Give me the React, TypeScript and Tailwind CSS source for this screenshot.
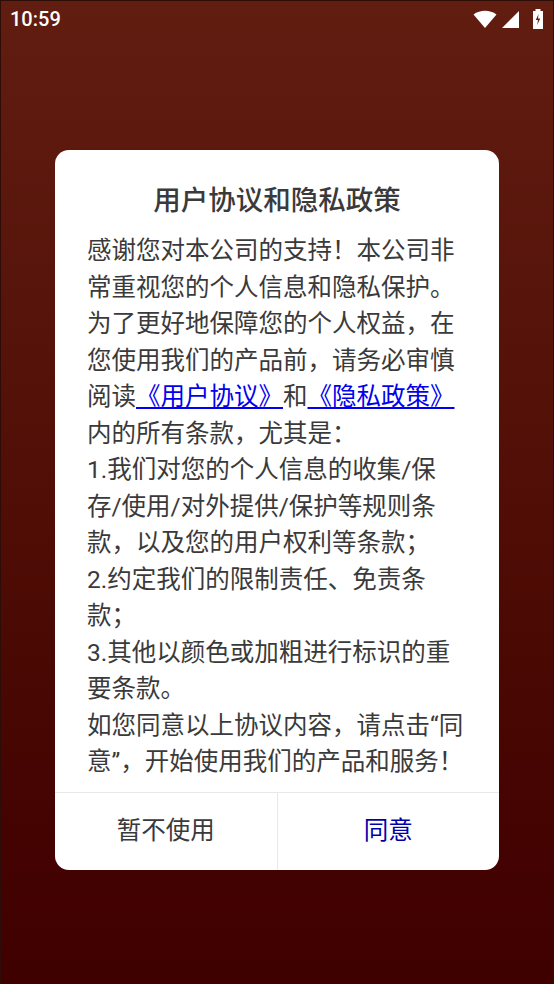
import React from "react";

const lines: React.ReactNode[] = [
  "感谢您对本公司的支持！本公司非",
  "常重视您的个人信息和隐私保护。",
  "为了更好地保障您的个人权益，在",
  "您使用我们的产品前，请务必审慎",
  <>
    阅读<span className="text-[#0000ee] underline">《用户协议》</span>和
    <span className="text-[#0000ee] underline">《隐私政策》</span>
  </>,
  "内的所有条款，尤其是：",
  "1.我们对您的个人信息的收集/保",
  "存/使用/对外提供/保护等规则条",
  "款，以及您的用户权利等条款；",
  "2.约定我们的限制责任、免责条",
  "款；",
  "3.其他以颜色或加粗进行标识的重",
  "要条款。",
  "如您同意以上协议内容，请点击“同",
  "意”，开始使用我们的产品和服务！",
];

function Status() {
  return (
    <div className="flex h-[37px] items-center justify-between pr-[9px] pb-[1px] pl-[9px] text-white">
      <span className="font-['Roboto',sans-serif] text-[20px] font-medium">10:59</span>
      <div className="flex items-center">
        <svg width="24" height="20" viewBox="0 0 24 20">
          <path d="M12 19 .5 5.500C7 .5 17 .5 23.500 5.500z" fill="#fff" />
        </svg>
        <svg width="18" height="20" viewBox="0 0 18 20" className="ml-[5px]">
          <path d="M0 19 17 2v17z" fill="#fff" />
        </svg>
        <svg width="12" height="22" viewBox="0 0 12 22" className="ml-[12px]">
          <path d="M3.500 1h5v2H11v18H1V3h2.500z" fill="#fff" />
          <path d="M6.500 6 3.800 12H6l-.8 5 3-6.500H6z" fill="#5f1c10" />
        </svg>
      </div>
    </div>
  );
}

export default function App() {
  return (
    <div className="flex h-[984px] w-[554px] flex-col border-x border-t border-[#2c0d07] bg-gradient-to-b from-[#621d11] to-[#3f0000] font-['Roboto','Noto_Sans_CJK_SC',sans-serif]">
      <Status />
      <div className="mt-[112px] ml-[54px] flex h-[720px] w-[444px] flex-col rounded-[14px] bg-white">
        <div className="pt-[29px] text-center text-[27.500px] leading-[44px] font-medium text-[#3a3a3a]">用户协议和隐私政策</div>
        <div className="flex-1 pt-[10px] pl-[32px] text-[24.500px] leading-[36.500px] whitespace-nowrap text-[#3a3a3a]">
          {lines.map((l, i) => (
            <div key={i}>{l}</div>
          ))}
        </div>
        <div className="flex h-[78px] border-t border-[#e8e8e8] text-[24.500px] text-[#3a3a3a]">
          <div className="flex flex-1 items-center justify-center border-r border-[#e8e8e8]">暂不使用</div>
          <div className="flex flex-1 items-center justify-center text-[#0000aa]">同意</div>
        </div>
      </div>
    </div>
  );
}
